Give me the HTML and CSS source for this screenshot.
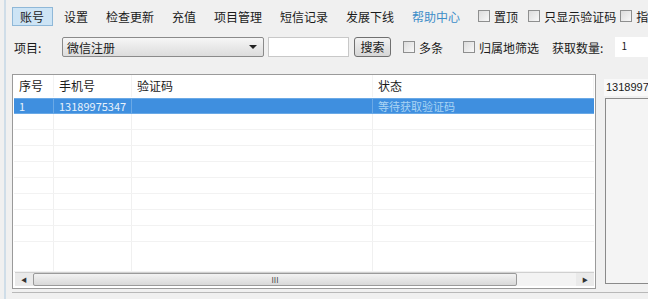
FILE: index.html
```html
<!DOCTYPE html>
<html>
<head>
<meta charset="utf-8">
<link rel="stylesheet" href="styles.css">
</head>
<body>
<div class="window">
  <div class="menubar">
    <span class="menu active">账号</span>
    <span class="menu first">设置</span>
    <span class="menu">检查更新</span>
    <span class="menu">充值</span>
    <span class="menu">项目管理</span>
    <span class="menu">短信记录</span>
    <span class="menu">发展下线</span>
    <span class="menu help">帮助中心</span>
    <span class="check m1"><span class="box"></span>置顶</span>
    <span class="check m2"><span class="box"></span>只显示验证码</span>
    <span class="check m3"><span class="box"></span>指</span>
  </div>
  <div class="toolbar">
    <span class="label">项目:</span>
    <div class="select"><span>微信注册</span><span class="arrow"></span></div>
    <div class="input"></div>
    <div class="button">搜索</div>
    <span class="check c1"><span class="box"></span>多条</span>
    <span class="check c2"><span class="box"></span>归属地筛选</span>
    <span class="label qty">获取数量:</span>
    <div class="num">1</div>
  </div>
  <div class="main">
    <div class="table">
      <div class="row head">
        <div class="cell c-idx">序号</div>
        <div class="cell c-phone">手机号</div>
        <div class="cell c-code">验证码</div>
        <div class="cell c-state">状态</div>
      </div>
      <div class="row sel">
        <div class="cell c-idx">1</div>
        <div class="cell c-phone">13189975347</div>
        <div class="cell c-code"></div>
        <div class="cell c-state">等待获取验证码</div>
      </div>
      <div class="row"><div class="cell c-idx"></div><div class="cell c-phone"></div><div class="cell c-code"></div><div class="cell c-state"></div></div>
      <div class="row"><div class="cell c-idx"></div><div class="cell c-phone"></div><div class="cell c-code"></div><div class="cell c-state"></div></div>
      <div class="row"><div class="cell c-idx"></div><div class="cell c-phone"></div><div class="cell c-code"></div><div class="cell c-state"></div></div>
      <div class="row"><div class="cell c-idx"></div><div class="cell c-phone"></div><div class="cell c-code"></div><div class="cell c-state"></div></div>
      <div class="row"><div class="cell c-idx"></div><div class="cell c-phone"></div><div class="cell c-code"></div><div class="cell c-state"></div></div>
      <div class="row"><div class="cell c-idx"></div><div class="cell c-phone"></div><div class="cell c-code"></div><div class="cell c-state"></div></div>
      <div class="row"><div class="cell c-idx"></div><div class="cell c-phone"></div><div class="cell c-code"></div><div class="cell c-state"></div></div>
      <div class="row"><div class="cell c-idx"></div><div class="cell c-phone"></div><div class="cell c-code"></div><div class="cell c-state"></div></div>
      <div class="row last"><div class="cell c-idx"></div><div class="cell c-phone"></div><div class="cell c-code"></div><div class="cell c-state"></div></div>
      <div class="hscroll">
        <div class="sbtn">&#9664;</div>
        <div class="thumb"><span class="grip">III</span></div>
        <div class="track"></div>
        <div class="sbtn">&#9654;</div>
      </div>
    </div>
    <div class="side">
      <div class="side-field">1318997</div>
      <div class="side-box"></div>
    </div>
  </div>
  <div class="bottom"></div>
</div>
</body>
</html>
```

FILE: styles.css
```css
* { box-sizing: border-box; }
html, body {
  margin: 0;
  padding: 0;
  width: 648px;
  height: 299px;
  overflow: hidden;
  background: #f0f0f0;
  font-family: "Noto Sans CJK SC", "DejaVu Sans", sans-serif;
  font-size: 12px;
  color: #1a1a1a;
}
.window {
  margin-left: 4px;
  border-left: 2px solid #cfdde8;
  height: 299px;
  padding-left: 6px;
  display: flex;
  flex-direction: column;
  overflow: hidden;
}
.menubar {
  display: flex;
  align-items: center;
  height: 20px;
  margin-top: 6px;
  white-space: nowrap;
}
.menubar > *, .toolbar > *, .main > * { flex-shrink: 0; }
.menu {
  padding: 0 8px;
  height: 19px;
  line-height: 18px;
  border: 1px solid transparent;
}
.menu.first { margin-left: 2px; }
.menu.active {
  background: #cde4f5;
  border-color: #8fb8d8;
  padding: 0 7px;
  width: 41px;
}
.menu.help { color: #3c8dc8; }
.check {
  display: flex;
  align-items: center;
  white-space: nowrap;
}
.m1 { margin-left: 9px; }
.m2 { margin-left: 10px; }
.m3 { margin-left: 4px; }
.box {
  width: 12px;
  height: 12px;
  border: 1px solid #8e8f8f;
  background: linear-gradient(135deg, #dcdcdc, #f8f8f8);
  margin-right: 4px;
  display: inline-block;
}
.toolbar {
  display: flex;
  align-items: center;
  height: 20px;
  margin-top: 11px;
  white-space: nowrap;
}
.label { margin-left: 2px; width: 48px; }
.select {
  width: 202px;
  height: 20px;
  border: 1px solid #8a8a8a;
  border-radius: 2px;
  background: linear-gradient(#f6f6f6, #dcdcdc);
  display: flex;
  align-items: center;
  justify-content: space-between;
  padding: 0 6px 0 4px;
}
.arrow {
  width: 0; height: 0;
  border-left: 4px solid transparent;
  border-right: 4px solid transparent;
  border-top: 4px solid #222;
}
.input {
  width: 81px;
  height: 20px;
  margin-left: 4px;
  background: #fff;
  border: 1px solid #c8c8c8;
}
.button {
  margin-left: 5px;
  width: 37px;
  height: 20px;
  border: 1px solid #707070;
  border-radius: 3px;
  background: linear-gradient(#f2f2f2, #d6d6d6);
  text-align: center;
  line-height: 18px;
}
.c1 { margin-left: 12px; }
.c2 { margin-left: 20px; }
.qty { margin-left: 13px; width: auto; }
.num {
  margin-left: 12px;
  padding-left: 6px;
  width: 40px;
  height: 20px;
  line-height: 18px;
  background: #fff;
  font-size: 10px;
}
.main {
  display: flex;
  margin-top: 17px;
  height: 215px;
}
.table {
  width: 584px;
  height: 215px;
  border: 1px solid #9a9a9a;
  background: #fff;
  padding: 0 1px 1px 1px;
  display: flex;
  flex-direction: column;
}
.row {
  display: flex;
  height: 16px;
  border-bottom: 1px solid #f2f2f2;
  flex-shrink: 0;
}
.row.head {
  height: 22px;
  align-items: center;
  border-bottom: none;
  margin-bottom: 1px;
}
.cell {
  height: 100%;
  padding-left: 5px;
  border-right: 1px solid #f0f0f0;
  white-space: nowrap;
  overflow: hidden;
}
.head .cell { line-height: 22px; border-right: 1px solid #f3f3f3; }
.c-idx { width: 40px; }
.c-phone { width: 78px; }
.c-code { width: 241px; }
.c-state { flex: 1; border-right: none; }
.row.sel {
  background: #3f8fdf;
  border-top: 1px solid #6aa9e6;
  border-bottom: 1px solid #6aa9e6;
  height: 16px;
  color: #e8f2fb;
  font-size: 11px;
  line-height: 14px;
}
.row.sel .cell { border-right: 1px solid #6aa9e6; overflow: visible; }
.row.sel .c-state { color: #a9d4f4; border-right: none; font-size: 11px; }
.row.last { flex: 1; }
.hscroll {
  display: flex;
  height: 14px;
  margin: 0 0 1px 1px;
  border-top: 1px solid #d0d0d0;
  background: #eaeaea;
  flex-shrink: 0;
}
.sbtn {
  width: 18px;
  font-size: 6px;
  line-height: 14px;
  text-align: center;
  color: #333;
}
.thumb {
  width: 484px;
  border: 1px solid #9a9a9a;
  border-radius: 2px;
  background: linear-gradient(#f3f3f3, #d8d8d8);
  text-align: center;
  font-size: 8px;
  line-height: 11px;
  color: #444;
}
.track { flex: 1; background: #f3f3f3; }
.side {
  margin-left: 8px;
  display: flex;
  flex-direction: column;
  flex: 1 0 46px;
}
.side-field {
  margin-top: 5px;
  height: 17px;
  line-height: 17px;
  padding-left: 2px;
  font-size: 11px;
  background: #f9f9f9;
  font-family: "Liberation Sans", Arial, sans-serif;
}
.side-box {
  margin-top: 2px;
  flex: 1;
  border: 1px solid #8a8a8a;
  border-right: none;
  background: #f4f4f4;
  margin-bottom: 5px;
  margin-left: 1px;
}
.bottom {
  border-top: 1px solid #b8b8b8;
  margin-top: 3px;
}
```
